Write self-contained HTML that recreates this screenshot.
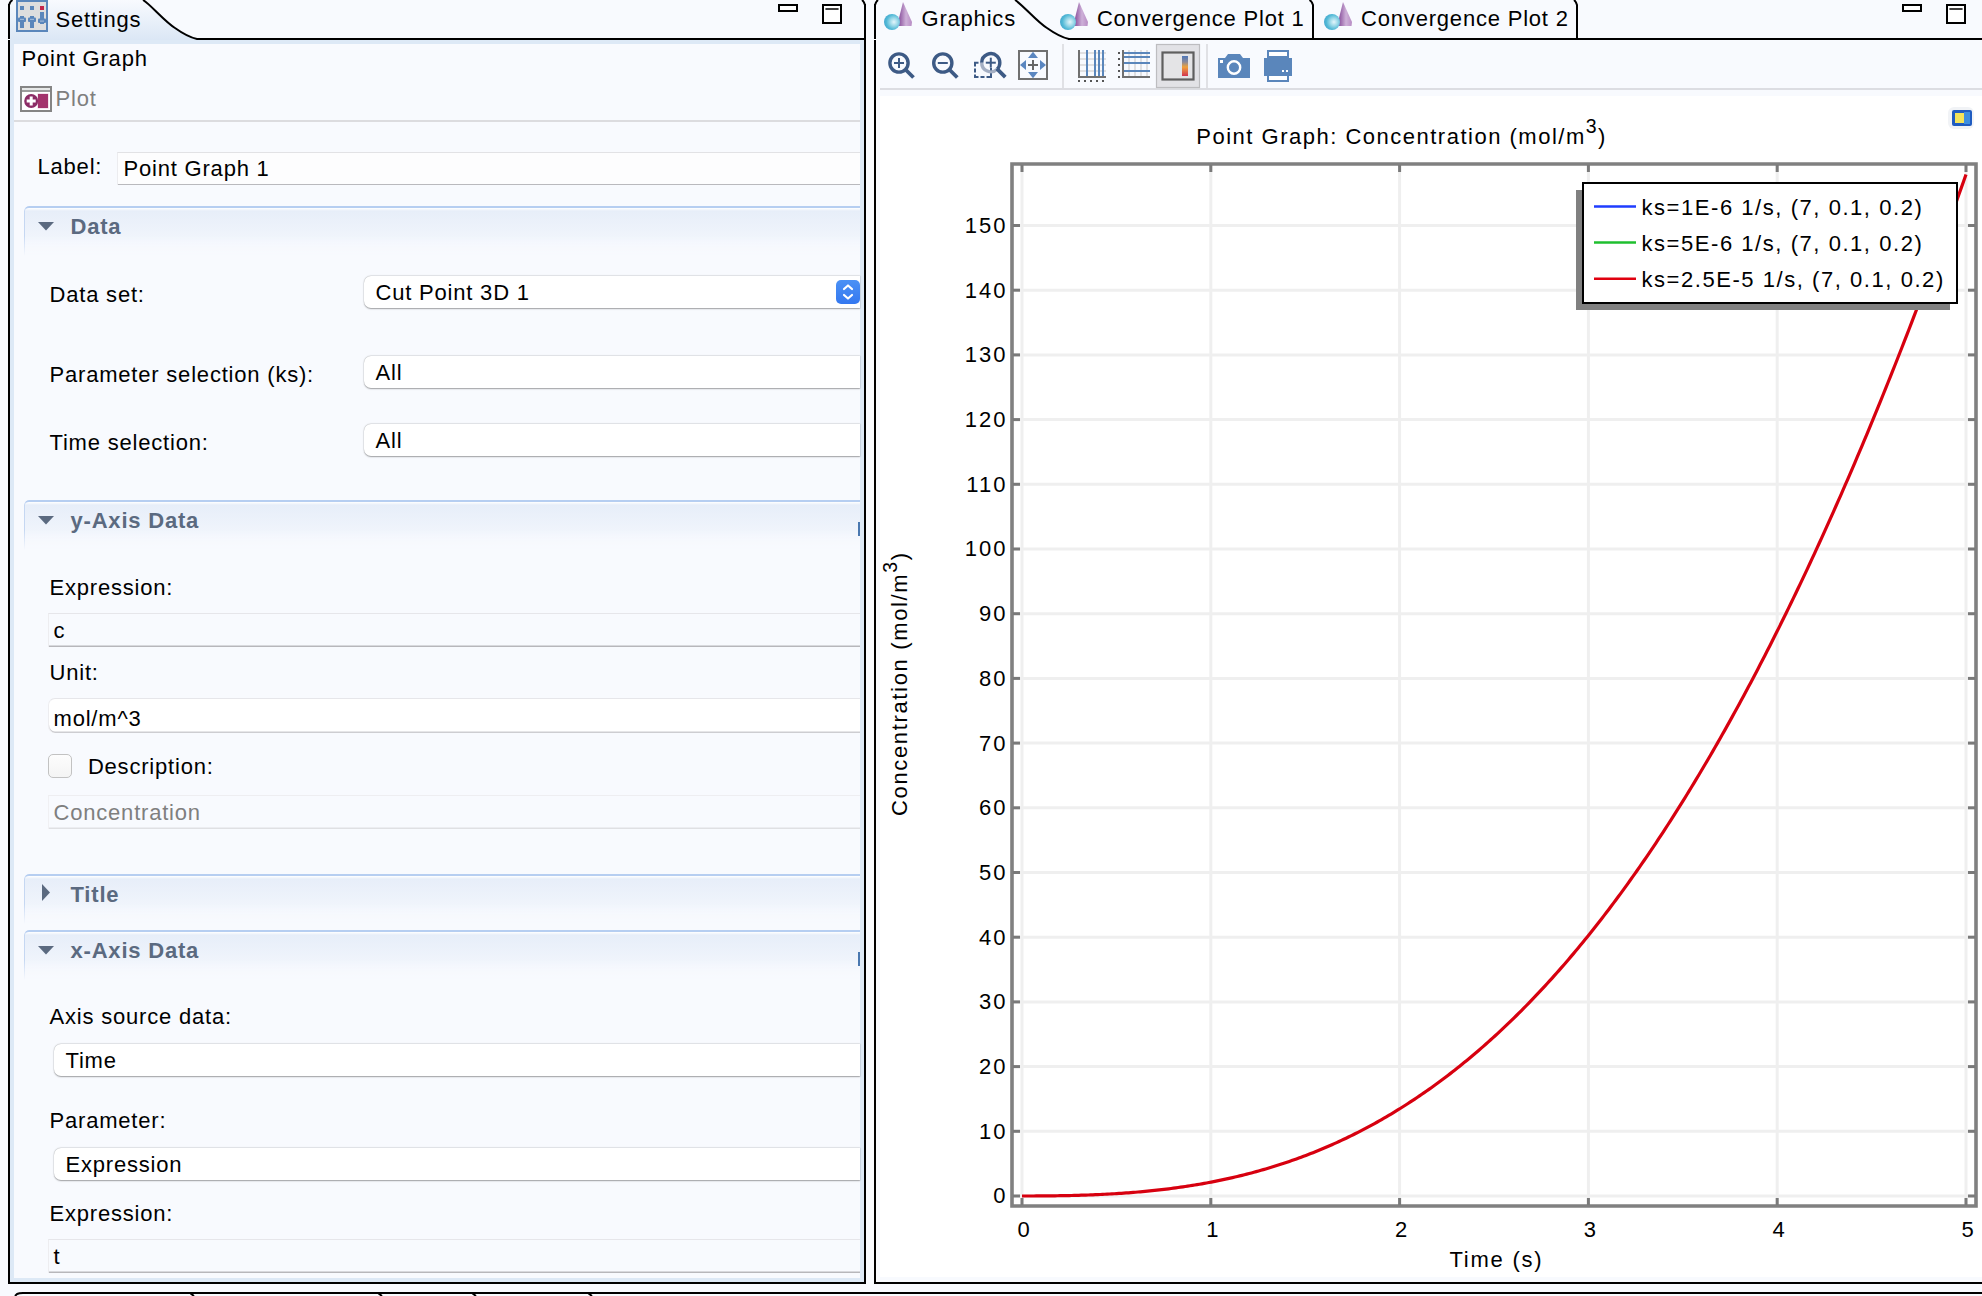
<!DOCTYPE html>
<html><head><meta charset="utf-8"><style>
html,body{margin:0;padding:0;}
body{width:1982px;height:1296px;position:relative;overflow:hidden;background:#f8fafe;font-family:'Liberation Sans', sans-serif;}
.t{position:absolute;white-space:nowrap;z-index:2;}
.r{position:absolute;}
sup{font-size:19.5px;vertical-align:0;position:relative;top:-10.5px;margin-left:0px;}
</style></head><body>
<div class="r" style="left:10px;top:40px;width:854px;height:1242px;background:#dde9f6;"></div>
<div class="r" style="left:14px;top:44px;width:846px;height:1234px;background:#f8fafe;"></div>
<div class="r" style="left:14px;top:120px;width:846px;height:2px;background:#dcdcdf;"></div>
<div class="r" style="left:8px;top:4px;width:2px;height:1280px;background:#000;"></div>
<div class="r" style="left:864px;top:4px;width:2px;height:1280px;background:#000;"></div>
<div class="r" style="left:8px;top:1282px;width:858px;height:2px;background:#000;"></div>
<div class="r" style="left:196px;top:38px;width:670px;height:2px;background:#000;"></div>
<div class="r" style="left:8px;top:38.5px;width:2px;height:1.5px;background:#fff;z-index:3"></div>
<div class="t" style="left:55.5px;top:8.5px;font-size:22px;line-height:22px;color:#000;font-weight:normal;letter-spacing:0.8px;">Settings</div>
<div class="t" style="left:21.5px;top:47.7px;font-size:22px;line-height:22px;color:#000;font-weight:normal;letter-spacing:0.8px;">Point Graph</div>
<div class="t" style="left:55.5px;top:87.7px;font-size:22px;line-height:22px;color:#7f7f7f;font-weight:normal;letter-spacing:0.8px;">Plot</div>
<div class="r" style="left:117px;top:152px;width:743px;height:33px;background:#fdfdfe;border-top:1px solid #e2e2e5;border-left:1px solid #ececef;box-shadow:inset 0 -1px 0 #b9b9bd;box-sizing:border-box;"></div>
<div class="t" style="left:37.5px;top:156.2px;font-size:22px;line-height:22px;color:#000;font-weight:normal;letter-spacing:0.8px;">Label:</div>
<div class="t" style="left:123.5px;top:158.2px;font-size:22px;line-height:22px;color:#000;font-weight:normal;letter-spacing:0.8px;">Point Graph 1</div>
<div class="r" style="left:24px;top:206px;width:836px;height:50px;border-top:2px solid #b6cef1;border-left:1px solid #c5d7f2;border-top-left-radius:5px;box-sizing:border-box;background:linear-gradient(to bottom,#ffffff 0px,#e7eef9 3px,#eef3fb 24px,#f8fafe 48px);-webkit-mask-image:linear-gradient(to bottom,#000 60%,rgba(0,0,0,0) 100%);"></div>
<svg class="r" style="left:38px;top:222px" width="16" height="9"><polygon points="0,0 16,0 8,8.5" fill="#5b6a80"/></svg>
<div class="t" style="left:70.5px;top:216.2px;font-size:22px;line-height:22px;color:#5b6a80;font-weight:bold;letter-spacing:0.8px;">Data</div>
<div class="t" style="left:49.5px;top:283.7px;font-size:22px;line-height:22px;color:#000;font-weight:normal;letter-spacing:0.8px;">Data set:</div>
<div class="r" style="left:364px;top:276px;width:496px;height:32px;background:#fff;border-radius:7px 0 0 7px;box-shadow:0 0.5px 1.5px rgba(0,0,0,0.35),0 0 0 0.5px rgba(0,0,0,0.06);"></div>
<div class="t" style="left:375.5px;top:281.9px;font-size:22px;line-height:22px;color:#000;font-weight:normal;letter-spacing:0.8px;">Cut Point 3D 1</div>
<div class="r" style="left:836px;top:280px;width:24px;height:24px;border-radius:5px;background:linear-gradient(#4b91f5,#3478f0);"></div>
<svg class="r" style="left:836px;top:280px" width="24" height="24"><polyline points="8,9 12,5.5 16,9" fill="none" stroke="#fff" stroke-width="2.2" stroke-linecap="round" stroke-linejoin="round"/><polyline points="8,15 12,18.5 16,15" fill="none" stroke="#fff" stroke-width="2.2" stroke-linecap="round" stroke-linejoin="round"/></svg>
<div class="t" style="left:49.5px;top:364.2px;font-size:22px;line-height:22px;color:#000;font-weight:normal;letter-spacing:0.8px;">Parameter selection (ks):</div>
<div class="r" style="left:364px;top:356px;width:496px;height:32px;background:#fff;border-radius:7px 0 0 7px;box-shadow:0 0.5px 1.5px rgba(0,0,0,0.35),0 0 0 0.5px rgba(0,0,0,0.06);"></div>
<div class="t" style="left:375.5px;top:362.2px;font-size:22px;line-height:22px;color:#000;font-weight:normal;letter-spacing:0.8px;">All</div>
<div class="t" style="left:49.5px;top:432.2px;font-size:22px;line-height:22px;color:#000;font-weight:normal;letter-spacing:0.8px;">Time selection:</div>
<div class="r" style="left:364px;top:424px;width:496px;height:32px;background:#fff;border-radius:7px 0 0 7px;box-shadow:0 0.5px 1.5px rgba(0,0,0,0.35),0 0 0 0.5px rgba(0,0,0,0.06);"></div>
<div class="t" style="left:375.5px;top:429.9px;font-size:22px;line-height:22px;color:#000;font-weight:normal;letter-spacing:0.8px;">All</div>
<div class="r" style="left:24px;top:500px;width:836px;height:50px;border-top:2px solid #b6cef1;border-left:1px solid #c5d7f2;border-top-left-radius:5px;box-sizing:border-box;background:linear-gradient(to bottom,#ffffff 0px,#e7eef9 3px,#eef3fb 24px,#f8fafe 48px);-webkit-mask-image:linear-gradient(to bottom,#000 60%,rgba(0,0,0,0) 100%);"></div>
<svg class="r" style="left:38px;top:516px" width="16" height="9"><polygon points="0,0 16,0 8,8.5" fill="#5b6a80"/></svg>
<div class="t" style="left:70.5px;top:510.2px;font-size:22px;line-height:22px;color:#5b6a80;font-weight:bold;letter-spacing:0.8px;">y-Axis Data</div>
<div class="r" style="left:858px;top:522px;width:2px;height:14px;background:#4a78b0;"></div>
<div class="t" style="left:49.5px;top:576.5px;font-size:22px;line-height:22px;color:#000;font-weight:normal;letter-spacing:0.8px;">Expression:</div>
<div class="r" style="left:48px;top:613px;width:812px;height:34px;background:#f8fafe;border-top:1px solid #e6e6ea;border-left:1px solid #ededf0;box-shadow:inset 0 -1.5px 0 #b7b7bb;box-sizing:border-box;"></div>
<div class="t" style="left:53.5px;top:620.4px;font-size:22px;line-height:22px;color:#000;font-weight:normal;letter-spacing:0.8px;">c</div>
<div class="t" style="left:49.5px;top:662.1px;font-size:22px;line-height:22px;color:#000;font-weight:normal;letter-spacing:0.8px;">Unit:</div>
<div class="r" style="left:48px;top:698px;width:812px;height:35px;background:#fff;border-radius:7px 0 0 7px;border-top:1px solid #e6e6ea;border-left:1px solid #ededf0;box-shadow:inset 0 -1.5px 0 #cdcdd1;box-sizing:border-box;"></div>
<div class="t" style="left:53.5px;top:708.2px;font-size:22px;line-height:22px;color:#000;font-weight:normal;letter-spacing:0.8px;">mol/m^3</div>
<div class="r" style="left:48px;top:754px;width:24px;height:24px;border-radius:5px;background:linear-gradient(#fdfdfd,#f4f4f4);border:1px solid #c2c2c2;box-sizing:border-box;"></div>
<div class="t" style="left:87.9px;top:756.2px;font-size:22px;line-height:22px;color:#000;font-weight:normal;letter-spacing:0.8px;">Description:</div>
<div class="r" style="left:48px;top:795px;width:812px;height:34px;background:#f8fafe;border-top:1px solid #eeeef1;border-left:1px solid #f0f0f3;box-shadow:inset 0 -1.5px 0 #dfe0e3;box-sizing:border-box;"></div>
<div class="t" style="left:53.5px;top:802.1px;font-size:22px;line-height:22px;color:#7f7f7f;font-weight:normal;letter-spacing:0.8px;">Concentration</div>
<div class="r" style="left:24px;top:874px;width:836px;height:50px;border-top:2px solid #b6cef1;border-left:1px solid #c5d7f2;border-top-left-radius:5px;box-sizing:border-box;background:linear-gradient(to bottom,#ffffff 0px,#e7eef9 3px,#eef3fb 24px,#f8fafe 48px);-webkit-mask-image:linear-gradient(to bottom,#000 60%,rgba(0,0,0,0) 100%);"></div>
<svg class="r" style="left:42px;top:884px" width="9" height="18"><polygon points="0,0 8,8.5 0,17" fill="#5b6a80"/></svg>
<div class="t" style="left:70.5px;top:884.2px;font-size:22px;line-height:22px;color:#5b6a80;font-weight:bold;letter-spacing:0.8px;">Title</div>
<div class="r" style="left:24px;top:930px;width:836px;height:50px;border-top:2px solid #b6cef1;border-left:1px solid #c5d7f2;border-top-left-radius:5px;box-sizing:border-box;background:linear-gradient(to bottom,#ffffff 0px,#e7eef9 3px,#eef3fb 24px,#f8fafe 48px);-webkit-mask-image:linear-gradient(to bottom,#000 60%,rgba(0,0,0,0) 100%);"></div>
<svg class="r" style="left:38px;top:946px" width="16" height="9"><polygon points="0,0 16,0 8,8.5" fill="#5b6a80"/></svg>
<div class="t" style="left:70.5px;top:940.2px;font-size:22px;line-height:22px;color:#5b6a80;font-weight:bold;letter-spacing:0.8px;">x-Axis Data</div>
<div class="r" style="left:858px;top:952px;width:2px;height:14px;background:#4a78b0;"></div>
<div class="t" style="left:49.5px;top:1006.3px;font-size:22px;line-height:22px;color:#000;font-weight:normal;letter-spacing:0.8px;">Axis source data:</div>
<div class="r" style="left:54px;top:1044px;width:806px;height:32px;background:#fff;border-radius:7px 0 0 7px;box-shadow:0 0.5px 1.5px rgba(0,0,0,0.35),0 0 0 0.5px rgba(0,0,0,0.06);"></div>
<div class="t" style="left:65.5px;top:1050.3px;font-size:22px;line-height:22px;color:#000;font-weight:normal;letter-spacing:0.8px;">Time</div>
<div class="t" style="left:49.5px;top:1110.2px;font-size:22px;line-height:22px;color:#000;font-weight:normal;letter-spacing:0.8px;">Parameter:</div>
<div class="r" style="left:54px;top:1148px;width:806px;height:32px;background:#fff;border-radius:7px 0 0 7px;box-shadow:0 0.5px 1.5px rgba(0,0,0,0.35),0 0 0 0.5px rgba(0,0,0,0.06);"></div>
<div class="t" style="left:65.5px;top:1154.2px;font-size:22px;line-height:22px;color:#000;font-weight:normal;letter-spacing:0.8px;">Expression</div>
<div class="t" style="left:49.5px;top:1202.5px;font-size:22px;line-height:22px;color:#000;font-weight:normal;letter-spacing:0.8px;">Expression:</div>
<div class="r" style="left:48px;top:1239px;width:812px;height:34px;background:#f8fafe;border-top:1px solid #e6e6ea;border-left:1px solid #ededf0;box-shadow:inset 0 -1.5px 0 #b7b7bb;box-sizing:border-box;"></div>
<div class="t" style="left:53.5px;top:1245.9px;font-size:22px;line-height:22px;color:#000;font-weight:normal;letter-spacing:0.8px;">t</div>
<svg class="r" style="left:0;top:1284px" width="1982" height="12"><path d="M15,12 L17,10 Q19,9 23,9 L190,9 L194,12 M190,9 L378,9 L382,12 M378,9 L472,9 L476,12 M472,9 L588,9 L592,12 M588,9 L1982,9" fill="none" stroke="#000" stroke-width="2"/></svg>
<div class="r" style="left:876px;top:40px;width:1106px;height:1243px;background:#f8fafe;"></div>
<div class="r" style="left:880px;top:88px;width:1102px;height:2px;background:#dcdde2;"></div>
<div class="r" style="left:880px;top:96px;width:1102px;height:1181px;background:#fff;"></div>
<div class="r" style="left:874px;top:4px;width:2px;height:1280px;background:#000;"></div>
<div class="r" style="left:874px;top:1282px;width:1108px;height:2px;background:#000;"></div>
<div class="r" style="left:1068px;top:38px;width:914px;height:2px;background:#000;"></div>
<div class="r" style="left:874px;top:38.5px;width:2px;height:1.5px;background:#fff;z-index:3"></div>
<div class="t" style="left:921.5px;top:8.0px;font-size:22px;line-height:22px;color:#000;font-weight:normal;letter-spacing:0.8px;">Graphics</div>
<div class="t" style="left:1096.9px;top:8.2px;font-size:22px;line-height:22px;color:#000;font-weight:normal;letter-spacing:0.8px;">Convergence Plot 1</div>
<div class="t" style="left:1361.1px;top:8.2px;font-size:22px;line-height:22px;color:#000;font-weight:normal;letter-spacing:0.8px;">Convergence Plot 2</div>
<svg class="r" style="left:0;top:0" width="1982" height="130"><defs><linearGradient id="tabg" x1="0" y1="0" x2="0" y2="1"><stop offset="0" stop-color="#f8fafe"/><stop offset="1" stop-color="#dbe7f5"/></linearGradient><radialGradient id="sph" cx="0.62" cy="0.5" r="0.62"><stop offset="0" stop-color="#e4f6fb"/><stop offset="0.4" stop-color="#9ad8e8"/><stop offset="0.75" stop-color="#52b9d6"/><stop offset="1" stop-color="#45a9cf"/></radialGradient><linearGradient id="cone" x1="0" y1="0" x2="1" y2="0"><stop offset="0.2" stop-color="#9560a6"/><stop offset="0.6" stop-color="#cdb0d8"/><stop offset="1" stop-color="#b88cc4"/></linearGradient><linearGradient id="cbar" x1="0" y1="0" x2="0" y2="1"><stop offset="0" stop-color="#4f77b7"/><stop offset="0.3" stop-color="#8a8a9a"/><stop offset="0.55" stop-color="#f0a23a"/><stop offset="1" stop-color="#d2344f"/></linearGradient></defs><path d="M10,40 L10,5 Q11,1 13,0 L143,0 C150,4 165,22 175,28 C182,33 188,37 197,39 L197,40 Z" fill="url(#tabg)"/><path d="M9,40 L9,5 Q10,1.5 12.5,0 M143,0 C150,4 165,22 175,28 C182,33 188,37 197,39 L200,39" fill="none" stroke="#000" stroke-width="2"/><path d="M865,5 Q864,1.5 862,0" fill="none" stroke="#000" stroke-width="2"/><path d="M875,5 Q876,1.5 878,0 M1015,0 C1022,4 1037,22 1047,28 C1054,33 1060,37 1069,39 L1072,39" fill="none" stroke="#000" stroke-width="2"/><path d="M1313,39 L1313,5 Q1312,1.5 1309.5,0" fill="none" stroke="#000" stroke-width="2"/><path d="M1577,39 L1577,5 Q1576,1.5 1574,0" fill="none" stroke="#000" stroke-width="2"/><rect x="779" y="5" width="18" height="6" fill="#fff" stroke="#000" stroke-width="2"/><rect x="1903" y="5" width="18" height="6" fill="#fff" stroke="#000" stroke-width="2"/><rect x="823" y="5" width="18" height="18" fill="#fff" stroke="#000" stroke-width="2"/><line x1="826" y1="9" x2="838" y2="9" stroke="#000" stroke-width="1.6" stroke-linecap="round"/><rect x="1947" y="5" width="18" height="18" fill="#fff" stroke="#000" stroke-width="2"/><line x1="1950" y1="9" x2="1962" y2="9" stroke="#000" stroke-width="1.6" stroke-linecap="round"/><rect x="17" y="1" width="30" height="30" fill="#dedede" stroke="#5a86bb" stroke-width="2"/><rect x="20" y="6" width="4" height="4" fill="#5a86bb"/><rect x="30" y="6" width="4" height="4" fill="#5a86bb"/><rect x="40" y="6" width="4" height="4" fill="#c4264a"/><rect x="20" y="16" width="4" height="12" fill="#5a86bb"/><rect x="30" y="16" width="4" height="12" fill="#5a86bb"/><rect x="40" y="12" width="4" height="12" fill="#5a86bb"/><rect x="18" y="17.5" width="8" height="4.5" rx="1" fill="#5a86bb"/><rect x="28" y="17.5" width="8" height="4.5" rx="1" fill="#5a86bb"/><rect x="38" y="18.5" width="8" height="4.5" rx="1" fill="#5a86bb"/><rect x="20" y="18.8" width="4" height="1.2" fill="#9db6d6"/><rect x="30" y="18.8" width="4" height="1.2" fill="#9db6d6"/><rect x="40" y="20.5" width="4" height="1.2" fill="#9db6d6"/><rect x="21" y="87" width="30" height="24" fill="#fff" stroke="#858585" stroke-width="2"/><rect x="22" y="88" width="28" height="2" fill="#e6e8e8"/><line x1="22" y1="91" x2="50" y2="91" stroke="#858585" stroke-width="1.6"/><rect x="37.5" y="93.5" width="11" height="15" fill="#e8c8da"/><rect x="38" y="94" width="10" height="14" fill="#a3336c"/><circle cx="31.2" cy="101" r="7" fill="#8c2c66"/><path d="M31.2,96.5 v9 M26.7,101 h9" stroke="#fff" stroke-width="3"/><path d="M897,26 L903,2 L912,22 L911.5,26 Z" fill="url(#cone)"/><circle cx="892" cy="22" r="8" fill="url(#sph)"/><path d="M1073,26 L1079,2 L1088,22 L1087.5,26 Z" fill="url(#cone)"/><circle cx="1068" cy="22" r="8" fill="url(#sph)"/><path d="M1337,26 L1343,2 L1352,22 L1351.5,26 Z" fill="url(#cone)"/><circle cx="1332" cy="22" r="8" fill="url(#sph)"/></svg>
<svg class="r" style="left:0;top:0" width="1982" height="100"><defs><linearGradient id="cbar2" x1="0" y1="0" x2="0" y2="1"><stop offset="0" stop-color="#4f77b7"/><stop offset="0.3" stop-color="#8a8a9a"/><stop offset="0.55" stop-color="#f0a23a"/><stop offset="1" stop-color="#d2344f"/></linearGradient></defs><circle cx="899" cy="63" r="9.1" fill="none" stroke="#3d5a85" stroke-width="3.4"/><line x1="905" y1="69" x2="913.5" y2="77.5" stroke="#3d5a85" stroke-width="3.8"/><line x1="894" y1="63" x2="904" y2="63" stroke="#3d5a85" stroke-width="2"/><line x1="899" y1="58" x2="899" y2="68" stroke="#3d5a85" stroke-width="2"/><circle cx="942.8" cy="63" r="9.1" fill="none" stroke="#3d5a85" stroke-width="3.4"/><line x1="948.8" y1="69" x2="957.3" y2="77.5" stroke="#3d5a85" stroke-width="3.8"/><line x1="937.8" y1="63" x2="947.8" y2="63" stroke="#3d5a85" stroke-width="2"/><path d="M975,66.5 V62.8 H978.5 M975,68.5 V72.5 M975,74.5 V77 H978.5 M980.5,77 H984.5 M986.5,77 H991 V73 M991,71 V68" fill="none" stroke="#3d5a85" stroke-width="2"/><path d="M981.6999999999999,62.7 A9.1,9.1 0 0 1 997.1999999999999,56.300000000000004 A9.1,9.1 0 0 1 997.1999999999999,69.10000000000001" fill="none" stroke="#3d5a85" stroke-width="3.4"/><path d="M997.1999999999999,69.10000000000001 A9.1,9.1 0 0 1 981.6999999999999,62.7" fill="none" stroke="#9aa6bd" stroke-width="3.4" opacity="0.9"/><line x1="996.8" y1="68.7" x2="1005.3" y2="77.2" stroke="#3d5a85" stroke-width="3.8"/><line x1="985.8" y1="62.7" x2="995.8" y2="62.7" stroke="#3d5a85" stroke-width="2"/><line x1="990.8" y1="57.7" x2="990.8" y2="67.7" stroke="#3d5a85" stroke-width="2"/><rect x="1019" y="51" width="28" height="28" fill="none" stroke="#707070" stroke-width="2"/><path d="M1033,60 v10 M1028,65 h10" stroke="#666" stroke-width="2"/><polygon points="1033,51.8 1028,58 1038,58" fill="#5a86c0"/><polygon points="1033,78.2 1028,72 1038,72" fill="#5a86c0"/><polygon points="1020,65 1026,60 1026,70" fill="#5a86c0"/><polygon points="1046,65 1040,60 1040,70" fill="#5a86c0"/><line x1="1063" y1="44" x2="1063" y2="88" stroke="#d8d8dc" stroke-width="1.5"/><line x1="1080" y1="53" x2="1106" y2="53" stroke="#e0e0e2" stroke-width="2"/><line x1="1080" y1="59" x2="1106" y2="59" stroke="#e0e0e2" stroke-width="2"/><line x1="1080" y1="65" x2="1106" y2="65" stroke="#e0e0e2" stroke-width="2"/><line x1="1080" y1="71" x2="1106" y2="71" stroke="#e0e0e2" stroke-width="2"/><line x1="1087" y1="50" x2="1087" y2="76" stroke="#5a86bb" stroke-width="2"/><line x1="1095" y1="50" x2="1095" y2="76" stroke="#5a86bb" stroke-width="2"/><line x1="1099" y1="50" x2="1099" y2="76" stroke="#5a86bb" stroke-width="2"/><line x1="1103" y1="50" x2="1103" y2="76" stroke="#5a86bb" stroke-width="2"/><path d="M1079,50 V77 H1106" fill="none" stroke="#707070" stroke-width="2"/><rect x="1078" y="80" width="2" height="2" fill="#555"/><rect x="1084" y="80" width="2" height="2" fill="#555"/><rect x="1090" y="80" width="2" height="2" fill="#555"/><rect x="1096" y="80" width="2" height="2" fill="#555"/><rect x="1102" y="80" width="2" height="2" fill="#555"/><line x1="1129" y1="50" x2="1129" y2="76" stroke="#e0e0e2" stroke-width="2"/><line x1="1135" y1="50" x2="1135" y2="76" stroke="#e0e0e2" stroke-width="2"/><line x1="1141" y1="50" x2="1141" y2="76" stroke="#e0e0e2" stroke-width="2"/><line x1="1147" y1="50" x2="1147" y2="76" stroke="#e0e0e2" stroke-width="2"/><line x1="1124" y1="53" x2="1150" y2="53" stroke="#5a86bb" stroke-width="2"/><line x1="1124" y1="57" x2="1150" y2="57" stroke="#5a86bb" stroke-width="2"/><line x1="1124" y1="63" x2="1150" y2="63" stroke="#5a86bb" stroke-width="2"/><line x1="1124" y1="71" x2="1150" y2="71" stroke="#5a86bb" stroke-width="2"/><path d="M1123,50 V77 H1150" fill="none" stroke="#707070" stroke-width="2"/><rect x="1118" y="52" width="2" height="2" fill="#555"/><rect x="1118" y="58" width="2" height="2" fill="#555"/><rect x="1118" y="64" width="2" height="2" fill="#555"/><rect x="1118" y="70" width="2" height="2" fill="#555"/><rect x="1118" y="76" width="2" height="2" fill="#555"/><rect x="1156.5" y="44.5" width="43" height="43" fill="#e2e2e6" stroke="#bdbdc0" stroke-width="1.2"/><rect x="1162.5" y="52.5" width="31" height="27" fill="#e4e4e6" stroke="#5f5f5f" stroke-width="2.2"/><rect x="1182" y="56" width="6" height="20" fill="url(#cbar2)"/><line x1="1207" y1="44" x2="1207" y2="88" stroke="#d8d8dc" stroke-width="1.5"/><path d="M1218,58 H1225 L1228,54 H1240 L1243,58 H1250 V78 H1218 Z" fill="#5a86bb"/><circle cx="1234" cy="67.5" r="6.2" fill="none" stroke="#fff" stroke-width="2.4"/><rect x="1220" y="60" width="3" height="3" fill="#fff"/><path d="M1268,51 H1288 V57 H1268 Z" fill="#fff" stroke="#5a86bb" stroke-width="2"/><path d="M1264,58 H1292 V76 H1289 V82 H1267 V76 H1264 Z" fill="#5a86bb"/><rect x="1269" y="76" width="18" height="4" fill="#fff"/><rect x="1282" y="70" width="2" height="2" fill="#fff"/><rect x="1286" y="70" width="2" height="2" fill="#fff"/></svg>
<svg class="r" style="left:0;top:0" width="1982" height="1296"><line x1="1022.0" y1="165" x2="1022.0" y2="1204" stroke="#efefef" stroke-width="3"/><line x1="1210.8" y1="165" x2="1210.8" y2="1204" stroke="#efefef" stroke-width="3"/><line x1="1399.6" y1="165" x2="1399.6" y2="1204" stroke="#efefef" stroke-width="3"/><line x1="1588.4" y1="165" x2="1588.4" y2="1204" stroke="#efefef" stroke-width="3"/><line x1="1777.2" y1="165" x2="1777.2" y2="1204" stroke="#efefef" stroke-width="3"/><line x1="1966.0" y1="165" x2="1966.0" y2="1204" stroke="#efefef" stroke-width="3"/><line x1="1014" y1="1196.0" x2="1974" y2="1196.0" stroke="#efefef" stroke-width="3"/><line x1="1014" y1="1131.3" x2="1974" y2="1131.3" stroke="#efefef" stroke-width="3"/><line x1="1014" y1="1066.6" x2="1974" y2="1066.6" stroke="#efefef" stroke-width="3"/><line x1="1014" y1="1001.9" x2="1974" y2="1001.9" stroke="#efefef" stroke-width="3"/><line x1="1014" y1="937.2" x2="1974" y2="937.2" stroke="#efefef" stroke-width="3"/><line x1="1014" y1="872.5" x2="1974" y2="872.5" stroke="#efefef" stroke-width="3"/><line x1="1014" y1="807.8" x2="1974" y2="807.8" stroke="#efefef" stroke-width="3"/><line x1="1014" y1="743.1" x2="1974" y2="743.1" stroke="#efefef" stroke-width="3"/><line x1="1014" y1="678.4" x2="1974" y2="678.4" stroke="#efefef" stroke-width="3"/><line x1="1014" y1="613.7" x2="1974" y2="613.7" stroke="#efefef" stroke-width="3"/><line x1="1014" y1="549.0" x2="1974" y2="549.0" stroke="#efefef" stroke-width="3"/><line x1="1014" y1="484.30000000000007" x2="1974" y2="484.30000000000007" stroke="#efefef" stroke-width="3"/><line x1="1014" y1="419.6" x2="1974" y2="419.6" stroke="#efefef" stroke-width="3"/><line x1="1014" y1="354.9" x2="1974" y2="354.9" stroke="#efefef" stroke-width="3"/><line x1="1014" y1="290.20000000000005" x2="1974" y2="290.20000000000005" stroke="#efefef" stroke-width="3"/><line x1="1014" y1="225.5" x2="1974" y2="225.5" stroke="#efefef" stroke-width="3"/><polyline points="1022.00,1196.00 1024.37,1196.00 1026.73,1196.00 1029.10,1195.99 1031.46,1195.99 1033.83,1195.98 1036.20,1195.97 1038.56,1195.95 1040.93,1195.94 1043.29,1195.92 1045.66,1195.90 1048.03,1195.88 1050.39,1195.85 1052.76,1195.83 1055.12,1195.79 1057.49,1195.76 1059.85,1195.72 1062.22,1195.68 1064.59,1195.64 1066.95,1195.59 1069.32,1195.54 1071.68,1195.48 1074.05,1195.42 1076.42,1195.36 1078.78,1195.29 1081.15,1195.22 1083.51,1195.15 1085.88,1195.07 1088.25,1194.99 1090.61,1194.90 1092.98,1194.80 1095.34,1194.71 1097.71,1194.60 1100.08,1194.50 1102.44,1194.38 1104.81,1194.27 1107.17,1194.14 1109.54,1194.01 1111.90,1193.88 1114.27,1193.74 1116.64,1193.60 1119.00,1193.45 1121.37,1193.29 1123.73,1193.13 1126.10,1192.96 1128.47,1192.78 1130.83,1192.60 1133.20,1192.42 1135.56,1192.22 1137.93,1192.02 1140.30,1191.82 1142.66,1191.60 1145.03,1191.38 1147.39,1191.16 1149.76,1190.92 1152.13,1190.68 1154.49,1190.43 1156.86,1190.18 1159.22,1189.91 1161.59,1189.64 1163.95,1189.37 1166.32,1189.08 1168.69,1188.79 1171.05,1188.49 1173.42,1188.18 1175.78,1187.86 1178.15,1187.53 1180.52,1187.20 1182.88,1186.86 1185.25,1186.51 1187.61,1186.15 1189.98,1185.78 1192.35,1185.41 1194.71,1185.02 1197.08,1184.63 1199.44,1184.23 1201.81,1183.81 1204.18,1183.39 1206.54,1182.96 1208.91,1182.52 1211.27,1182.08 1213.64,1181.62 1216.01,1181.15 1218.37,1180.67 1220.74,1180.19 1223.10,1179.69 1225.47,1179.18 1227.83,1178.66 1230.20,1178.14 1232.57,1177.60 1234.93,1177.05 1237.30,1176.50 1239.66,1175.93 1242.03,1175.35 1244.40,1174.76 1246.76,1174.16 1249.13,1173.55 1251.49,1172.93 1253.86,1172.29 1256.23,1171.65 1258.59,1170.99 1260.96,1170.33 1263.32,1169.65 1265.69,1168.96 1268.06,1168.26 1270.42,1167.55 1272.79,1166.83 1275.15,1166.09 1277.52,1165.34 1279.88,1164.58 1282.25,1163.81 1284.62,1163.03 1286.98,1162.24 1289.35,1161.43 1291.71,1160.61 1294.08,1159.78 1296.45,1158.93 1298.81,1158.07 1301.18,1157.20 1303.54,1156.32 1305.91,1155.43 1308.28,1154.52 1310.64,1153.60 1313.01,1152.66 1315.37,1151.72 1317.74,1150.76 1320.11,1149.78 1322.47,1148.80 1324.84,1147.80 1327.20,1146.78 1329.57,1145.76 1331.93,1144.71 1334.30,1143.66 1336.67,1142.59 1339.03,1141.51 1341.40,1140.41 1343.76,1139.30 1346.13,1138.18 1348.50,1137.04 1350.86,1135.89 1353.23,1134.72 1355.59,1133.54 1357.96,1132.34 1360.33,1131.13 1362.69,1129.90 1365.06,1128.66 1367.42,1127.41 1369.79,1126.14 1372.16,1124.85 1374.52,1123.56 1376.89,1122.24 1379.25,1120.91 1381.62,1119.57 1383.98,1118.21 1386.35,1116.83 1388.72,1115.44 1391.08,1114.03 1393.45,1112.61 1395.81,1111.17 1398.18,1109.72 1400.55,1108.25 1402.91,1106.76 1405.28,1105.26 1407.64,1103.74 1410.01,1102.21 1412.38,1100.66 1414.74,1099.10 1417.11,1097.51 1419.47,1095.92 1421.84,1094.30 1424.21,1092.67 1426.57,1091.02 1428.94,1089.36 1431.30,1087.68 1433.67,1085.98 1436.04,1084.26 1438.40,1082.53 1440.77,1080.78 1443.13,1079.02 1445.50,1077.24 1447.86,1075.44 1450.23,1073.62 1452.60,1071.79 1454.96,1069.93 1457.33,1068.06 1459.69,1066.18 1462.06,1064.27 1464.43,1062.35 1466.79,1060.41 1469.16,1058.46 1471.52,1056.48 1473.89,1054.49 1476.26,1052.48 1478.62,1050.45 1480.99,1048.40 1483.35,1046.34 1485.72,1044.25 1488.09,1042.15 1490.45,1040.03 1492.82,1037.90 1495.18,1035.74 1497.55,1033.57 1499.91,1031.37 1502.28,1029.16 1504.65,1026.93 1507.01,1024.68 1509.38,1022.41 1511.74,1020.12 1514.11,1017.82 1516.48,1015.49 1518.84,1013.15 1521.21,1010.79 1523.57,1008.41 1525.94,1006.00 1528.31,1003.58 1530.67,1001.14 1533.04,998.68 1535.40,996.21 1537.77,993.71 1540.14,991.19 1542.50,988.65 1544.87,986.10 1547.23,983.52 1549.60,980.92 1551.96,978.31 1554.33,975.67 1556.70,973.02 1559.06,970.34 1561.43,967.64 1563.79,964.93 1566.16,962.19 1568.53,959.44 1570.89,956.66 1573.26,953.86 1575.62,951.04 1577.99,948.21 1580.36,945.35 1582.72,942.47 1585.09,939.57 1587.45,936.65 1589.82,933.71 1592.19,930.75 1594.55,927.77 1596.92,924.76 1599.28,921.74 1601.65,918.70 1604.02,915.63 1606.38,912.54 1608.75,909.44 1611.11,906.31 1613.48,903.16 1615.84,899.98 1618.21,896.79 1620.58,893.58 1622.94,890.34 1625.31,887.09 1627.67,883.81 1630.04,880.51 1632.41,877.19 1634.77,873.84 1637.14,870.48 1639.50,867.09 1641.87,863.69 1644.24,860.26 1646.60,856.80 1648.97,853.33 1651.33,849.84 1653.70,846.32 1656.07,842.78 1658.43,839.22 1660.80,835.63 1663.16,832.03 1665.53,828.40 1667.89,824.75 1670.26,821.08 1672.63,817.38 1674.99,813.67 1677.36,809.93 1679.72,806.16 1682.09,802.38 1684.46,798.57 1686.82,794.74 1689.19,790.89 1691.55,787.02 1693.92,783.12 1696.29,779.20 1698.65,775.25 1701.02,771.29 1703.38,767.30 1705.75,763.29 1708.12,759.25 1710.48,755.19 1712.85,751.11 1715.21,747.01 1717.58,742.88 1719.94,738.73 1722.31,734.56 1724.68,730.36 1727.04,726.14 1729.41,721.90 1731.77,717.63 1734.14,713.34 1736.51,709.03 1738.87,704.69 1741.24,700.33 1743.60,695.95 1745.97,691.54 1748.34,687.11 1750.70,682.66 1753.07,678.18 1755.43,673.68 1757.80,669.15 1760.17,664.60 1762.53,660.03 1764.90,655.43 1767.26,650.81 1769.63,646.16 1771.99,641.50 1774.36,636.80 1776.73,632.09 1779.09,627.35 1781.46,622.58 1783.82,617.79 1786.19,612.98 1788.56,608.14 1790.92,603.28 1793.29,598.39 1795.65,593.48 1798.02,588.55 1800.39,583.59 1802.75,578.61 1805.12,573.60 1807.48,568.57 1809.85,563.51 1812.22,558.43 1814.58,553.33 1816.95,548.20 1819.31,543.04 1821.68,537.87 1824.05,532.66 1826.41,527.43 1828.78,522.18 1831.14,516.90 1833.51,511.60 1835.87,506.27 1838.24,500.92 1840.61,495.55 1842.97,490.15 1845.34,484.72 1847.70,479.27 1850.07,473.79 1852.44,468.29 1854.80,462.77 1857.17,457.21 1859.53,451.64 1861.90,446.04 1864.27,440.41 1866.63,434.76 1869.00,429.08 1871.36,423.38 1873.73,417.66 1876.10,411.91 1878.46,406.13 1880.83,400.33 1883.19,394.50 1885.56,388.65 1887.92,382.77 1890.29,376.87 1892.66,370.94 1895.02,364.98 1897.39,359.00 1899.75,353.00 1902.12,346.97 1904.49,340.91 1906.85,334.83 1909.22,328.73 1911.58,322.59 1913.95,316.44 1916.32,310.25 1918.68,304.05 1921.05,297.81 1923.41,291.55 1925.78,285.27 1928.15,278.96 1930.51,272.62 1932.88,266.26 1935.24,259.87 1937.61,253.46 1939.97,247.02 1942.34,240.55 1944.71,234.06 1947.07,227.55 1949.44,221.00 1951.80,214.44 1954.17,207.84 1956.54,201.22 1958.90,194.58 1961.27,187.90 1963.63,181.21 1966.00,174.48" fill="none" stroke="#d7000f" stroke-width="3.2"/><path d="M1012,1206 V164 H1976 V1206 Z" fill="none" stroke="#808080" stroke-width="3.6"/><line x1="1022.0" y1="165" x2="1022.0" y2="172" stroke="#7a7a7a" stroke-width="3"/><line x1="1022.0" y1="1198" x2="1022.0" y2="1205" stroke="#7a7a7a" stroke-width="3"/><line x1="1210.8" y1="165" x2="1210.8" y2="172" stroke="#7a7a7a" stroke-width="3"/><line x1="1210.8" y1="1198" x2="1210.8" y2="1205" stroke="#7a7a7a" stroke-width="3"/><line x1="1399.6" y1="165" x2="1399.6" y2="172" stroke="#7a7a7a" stroke-width="3"/><line x1="1399.6" y1="1198" x2="1399.6" y2="1205" stroke="#7a7a7a" stroke-width="3"/><line x1="1588.4" y1="165" x2="1588.4" y2="172" stroke="#7a7a7a" stroke-width="3"/><line x1="1588.4" y1="1198" x2="1588.4" y2="1205" stroke="#7a7a7a" stroke-width="3"/><line x1="1777.2" y1="165" x2="1777.2" y2="172" stroke="#7a7a7a" stroke-width="3"/><line x1="1777.2" y1="1198" x2="1777.2" y2="1205" stroke="#7a7a7a" stroke-width="3"/><line x1="1966.0" y1="165" x2="1966.0" y2="172" stroke="#7a7a7a" stroke-width="3"/><line x1="1966.0" y1="1198" x2="1966.0" y2="1205" stroke="#7a7a7a" stroke-width="3"/><line x1="1013" y1="1196.0" x2="1020" y2="1196.0" stroke="#7a7a7a" stroke-width="3"/><line x1="1968" y1="1196.0" x2="1975" y2="1196.0" stroke="#7a7a7a" stroke-width="3"/><line x1="1013" y1="1131.3" x2="1020" y2="1131.3" stroke="#7a7a7a" stroke-width="3"/><line x1="1968" y1="1131.3" x2="1975" y2="1131.3" stroke="#7a7a7a" stroke-width="3"/><line x1="1013" y1="1066.6" x2="1020" y2="1066.6" stroke="#7a7a7a" stroke-width="3"/><line x1="1968" y1="1066.6" x2="1975" y2="1066.6" stroke="#7a7a7a" stroke-width="3"/><line x1="1013" y1="1001.9" x2="1020" y2="1001.9" stroke="#7a7a7a" stroke-width="3"/><line x1="1968" y1="1001.9" x2="1975" y2="1001.9" stroke="#7a7a7a" stroke-width="3"/><line x1="1013" y1="937.2" x2="1020" y2="937.2" stroke="#7a7a7a" stroke-width="3"/><line x1="1968" y1="937.2" x2="1975" y2="937.2" stroke="#7a7a7a" stroke-width="3"/><line x1="1013" y1="872.5" x2="1020" y2="872.5" stroke="#7a7a7a" stroke-width="3"/><line x1="1968" y1="872.5" x2="1975" y2="872.5" stroke="#7a7a7a" stroke-width="3"/><line x1="1013" y1="807.8" x2="1020" y2="807.8" stroke="#7a7a7a" stroke-width="3"/><line x1="1968" y1="807.8" x2="1975" y2="807.8" stroke="#7a7a7a" stroke-width="3"/><line x1="1013" y1="743.1" x2="1020" y2="743.1" stroke="#7a7a7a" stroke-width="3"/><line x1="1968" y1="743.1" x2="1975" y2="743.1" stroke="#7a7a7a" stroke-width="3"/><line x1="1013" y1="678.4" x2="1020" y2="678.4" stroke="#7a7a7a" stroke-width="3"/><line x1="1968" y1="678.4" x2="1975" y2="678.4" stroke="#7a7a7a" stroke-width="3"/><line x1="1013" y1="613.7" x2="1020" y2="613.7" stroke="#7a7a7a" stroke-width="3"/><line x1="1968" y1="613.7" x2="1975" y2="613.7" stroke="#7a7a7a" stroke-width="3"/><line x1="1013" y1="549.0" x2="1020" y2="549.0" stroke="#7a7a7a" stroke-width="3"/><line x1="1968" y1="549.0" x2="1975" y2="549.0" stroke="#7a7a7a" stroke-width="3"/><line x1="1013" y1="484.30000000000007" x2="1020" y2="484.30000000000007" stroke="#7a7a7a" stroke-width="3"/><line x1="1968" y1="484.30000000000007" x2="1975" y2="484.30000000000007" stroke="#7a7a7a" stroke-width="3"/><line x1="1013" y1="419.6" x2="1020" y2="419.6" stroke="#7a7a7a" stroke-width="3"/><line x1="1968" y1="419.6" x2="1975" y2="419.6" stroke="#7a7a7a" stroke-width="3"/><line x1="1013" y1="354.9" x2="1020" y2="354.9" stroke="#7a7a7a" stroke-width="3"/><line x1="1968" y1="354.9" x2="1975" y2="354.9" stroke="#7a7a7a" stroke-width="3"/><line x1="1013" y1="290.20000000000005" x2="1020" y2="290.20000000000005" stroke="#7a7a7a" stroke-width="3"/><line x1="1968" y1="290.20000000000005" x2="1975" y2="290.20000000000005" stroke="#7a7a7a" stroke-width="3"/><line x1="1013" y1="225.5" x2="1020" y2="225.5" stroke="#7a7a7a" stroke-width="3"/><line x1="1968" y1="225.5" x2="1975" y2="225.5" stroke="#7a7a7a" stroke-width="3"/><rect x="1576" y="190" width="374" height="120" fill="#808080"/><rect x="1583" y="183" width="374" height="120" fill="#fff" stroke="#000" stroke-width="2"/><line x1="1594" y1="206.5" x2="1636" y2="206.5" stroke="#1f3dff" stroke-width="2.5"/><line x1="1594" y1="242.5" x2="1636" y2="242.5" stroke="#1fbf2f" stroke-width="2.5"/><line x1="1594" y1="278.8" x2="1636" y2="278.8" stroke="#e0000f" stroke-width="2.5"/><rect x="1948" y="107" width="26" height="22" rx="6" fill="#eef0f4" opacity="0.8"/><rect x="1952" y="110" width="20" height="16" rx="2" fill="#1f5cc0"/><rect x="1955" y="113" width="9" height="10" fill="#f3e35a"/><rect x="1964" y="112" width="6" height="12" fill="#3c8ee0"/></svg>
<div class="t" style="left:1196.3px;top:125.5px;font-size:22px;line-height:22px;color:#000;font-weight:normal;letter-spacing:1.5px;">Point Graph: Concentration (mol/m<sup>3</sup>)</div>
<div class="t" style="left:907.4px;width:100px;text-align:right;top:1185.4px;font-size:22px;line-height:22px;letter-spacing:2px;">0</div>
<div class="t" style="left:907.4px;width:100px;text-align:right;top:1120.7px;font-size:22px;line-height:22px;letter-spacing:2px;">10</div>
<div class="t" style="left:907.4px;width:100px;text-align:right;top:1056.0px;font-size:22px;line-height:22px;letter-spacing:2px;">20</div>
<div class="t" style="left:907.4px;width:100px;text-align:right;top:991.3px;font-size:22px;line-height:22px;letter-spacing:2px;">30</div>
<div class="t" style="left:907.4px;width:100px;text-align:right;top:926.6px;font-size:22px;line-height:22px;letter-spacing:2px;">40</div>
<div class="t" style="left:907.4px;width:100px;text-align:right;top:861.9px;font-size:22px;line-height:22px;letter-spacing:2px;">50</div>
<div class="t" style="left:907.4px;width:100px;text-align:right;top:797.2px;font-size:22px;line-height:22px;letter-spacing:2px;">60</div>
<div class="t" style="left:907.4px;width:100px;text-align:right;top:732.5px;font-size:22px;line-height:22px;letter-spacing:2px;">70</div>
<div class="t" style="left:907.4px;width:100px;text-align:right;top:667.8px;font-size:22px;line-height:22px;letter-spacing:2px;">80</div>
<div class="t" style="left:907.4px;width:100px;text-align:right;top:603.1px;font-size:22px;line-height:22px;letter-spacing:2px;">90</div>
<div class="t" style="left:907.4px;width:100px;text-align:right;top:538.4px;font-size:22px;line-height:22px;letter-spacing:2px;">100</div>
<div class="t" style="left:907.4px;width:100px;text-align:right;top:473.7px;font-size:22px;line-height:22px;letter-spacing:2px;">110</div>
<div class="t" style="left:907.4px;width:100px;text-align:right;top:409.0px;font-size:22px;line-height:22px;letter-spacing:2px;">120</div>
<div class="t" style="left:907.4px;width:100px;text-align:right;top:344.3px;font-size:22px;line-height:22px;letter-spacing:2px;">130</div>
<div class="t" style="left:907.4px;width:100px;text-align:right;top:279.6px;font-size:22px;line-height:22px;letter-spacing:2px;">140</div>
<div class="t" style="left:907.4px;width:100px;text-align:right;top:214.9px;font-size:22px;line-height:22px;letter-spacing:2px;">150</div>
<div class="t" style="left:993.5px;width:60px;text-align:center;top:1218.9px;font-size:22px;line-height:22px;">0</div>
<div class="t" style="left:1182.3px;width:60px;text-align:center;top:1218.9px;font-size:22px;line-height:22px;">1</div>
<div class="t" style="left:1371.1px;width:60px;text-align:center;top:1218.9px;font-size:22px;line-height:22px;">2</div>
<div class="t" style="left:1559.9px;width:60px;text-align:center;top:1218.9px;font-size:22px;line-height:22px;">3</div>
<div class="t" style="left:1748.7px;width:60px;text-align:center;top:1218.9px;font-size:22px;line-height:22px;">4</div>
<div class="t" style="left:1937.5px;width:60px;text-align:center;top:1218.9px;font-size:22px;line-height:22px;">5</div>
<div class="t" style="left:1449.5px;top:1248.8px;font-size:22px;line-height:22px;color:#000;font-weight:normal;letter-spacing:1.75px;">Time (s)</div>
<div class="t" style="left:1641.5px;top:197.2px;font-size:22px;line-height:22px;color:#000;font-weight:normal;letter-spacing:1.55px;">ks=1E-6 1/s, (7, 0.1, 0.2)</div>
<div class="t" style="left:1641.5px;top:233.2px;font-size:22px;line-height:22px;color:#000;font-weight:normal;letter-spacing:1.55px;">ks=5E-6 1/s, (7, 0.1, 0.2)</div>
<div class="t" style="left:1641.5px;top:269.2px;font-size:22px;line-height:22px;color:#000;font-weight:normal;letter-spacing:1.55px;">ks=2.5E-5 1/s, (7, 0.1, 0.2)</div>
<div class="t" style="left:907.8px;top:815.8px;transform-origin:0 0;transform:rotate(-90deg);font-size:22px;line-height:22px;letter-spacing:1.65px;"><span style="position:relative;top:-18.62px">Concentration (mol/m<sup>3</sup>)</span></div>
</body></html>
